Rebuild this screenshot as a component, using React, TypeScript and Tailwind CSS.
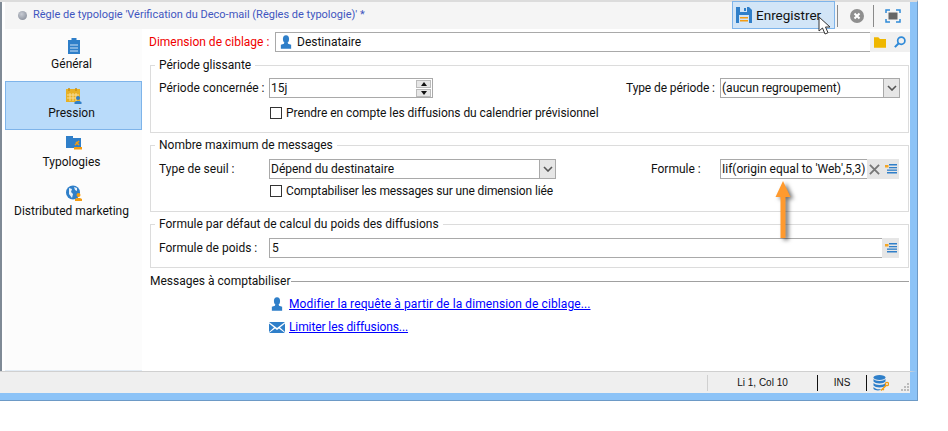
const font = "[font-family:'Roboto','Noto_Sans',sans-serif]";

function User({ className = "w-3 h-3.5" }: { className?: string }) {
  return (
    <svg viewBox="0 0 14 16" className={className}>
      <ellipse cx="7" cy="4.5" rx="3.6" ry="4.5" fill="#2f7fc9" />
      <path d="M5.2 8h3.6l.6 2 3.6 1.2V16H1v-4.8L4.6 10z" fill="#2f7fc9" />
    </svg>
  );
}

function ListIcon() {
  return (
    <svg viewBox="0 0 12 10" className="w-3 h-2.5">
      <rect x="0" y="1" width="3.5" height="2.5" fill="#f5a623" />
      <rect x="4" y="0" width="8" height="1.5" fill="#2f7fc9" />
      <rect x="4" y="3" width="8" height="1.300" fill="#2f7fc9" />
      <rect x="2" y="5.500" width="10" height="1.300" fill="#2f7fc9" />
      <rect x="2" y="8" width="10" height="1.500" fill="#2f7fc9" />
    </svg>
  );
}

function Chevron() {
  return (
    <svg viewBox="0 0 10 6" className="w-2.5 h-1.5">
      <path d="M1 1l4 4 4-4" fill="none" stroke="#555" strokeWidth="1.6" />
    </svg>
  );
}

function Select({ value, width }: { value: string; width: string }) {
  return (
    <div className={`${width} h-5 flex items-center border border-[#a9a9a9] bg-white`}>
      <span className="flex-1 pl-px whitespace-nowrap">{value}</span>
      <div className="w-4 h-full flex items-center justify-center bg-[#e6e6e6] border-l border-[#a9a9a9]">
        <Chevron />
      </div>
    </div>
  );
}

function Check({ label, tracking }: { label: string; tracking: string }) {
  return (
    <label className="flex items-center gap-1 h-4">
      <span className="w-3 h-3 border border-[#333] bg-white" />
      <span className={`whitespace-nowrap ${tracking}`}>{label}</span>
    </label>
  );
}

function NavItem({
  icon,
  label,
  active,
  top = "pt-[6px]",
}: {
  icon: React.ReactNode;
  label: string;
  active?: boolean;
  top?: string;
}) {
  return (
    <div
      className={`h-[49px] flex flex-col items-center ${top} ${
        active ? "border border-[#7eb4ea] bg-[#b9dbfa]" : ""
      }`}
    >
      <div className="h-4 flex items-start justify-center">{icon}</div>
      <span className={`${active ? "mt-px" : "mt-[2px]"} pr-1 leading-4 whitespace-nowrap`}>{label}</span>
    </div>
  );
}

export default function App() {
  return (
    <div className={`w-[948px] h-[431px] bg-white overflow-hidden relative text-[12px] text-[#111] ${font}`}>
      <div className="w-[918px] h-[401px] flex flex-col border-t-[2px] border-t-[#dcdcdc] border-r border-r-[#6d9ac6] border-b border-b-[#6d9ac6]">
        <div className="flex-1 flex flex-col min-h-0 border-l-[2px] border-l-[#7f8a96] border-r-[7px] border-r-[#8cc3f7] pl-[3px]">
          {/* title bar */}
          <div className="h-[27px] shrink-0 flex items-center bg-[#f5f5f5] pl-[13px] pr-[9px]">
            <span className="w-[9px] h-[9px] rounded-full bg-[radial-gradient(circle_at_40%_35%,#c8ccd4,#7d8390)]" />
            <span className="ml-[6px] flex-1 text-[11px] text-[#3f55c0] whitespace-nowrap">
              Règle de typologie 'Vérification du Deco-mail (Règles de typologie)' *
            </span>
            <div className="self-end h-[28px] w-[103px] flex items-center gap-1 pl-[3px] border border-[#7eb4ea] bg-[#d2e5f7] text-[13.5px]">
              <svg viewBox="0 0 16 16" className="w-4 h-4 shrink-0">
                <path d="M0 0h13l3 3v13H0z" fill="#2f7fc9" />
                <rect x="4" y="0" width="7" height="5" fill="#d2e5f7" />
                <rect x="8" y="1" width="2" height="3" fill="#2f7fc9" />
                <rect x="3" y="8" width="10" height="8" fill="#d2e5f7" />
                <rect x="4" y="10" width="8" height="1.5" fill="#f39c12" />
                <rect x="4" y="13" width="8" height="1.5" fill="#f39c12" />
              </svg>
              <span>Enregistrer</span>
            </div>
            <div className="ml-0.5 w-px h-[22px] bg-[#8a8a8a]" />
            <svg viewBox="0 0 14 14" className="ml-3 w-3.5 h-3.5">
              <circle cx="7" cy="7" r="7" fill="#8f8f8f" />
              <path d="M4.5 4.5l5 5M9.5 4.5l-5 5" stroke="#fff" strokeWidth="2" />
            </svg>
            <div className="ml-[9px] w-px h-[22px] bg-[#8a8a8a]" />
            <svg viewBox="0 0 16 14" className="ml-[11px] w-4 h-3.5">
              <path d="M1 4V1h4M11 1h4v3M15 10v3h-4M5 13H1v-3" fill="none" stroke="#2f8ad8" strokeWidth="1.5" />
              <rect x="3.5" y="3.5" width="9" height="7" fill="#666" />
            </svg>
          </div>

          <div className="flex-1 flex min-h-0">
            {/* sidebar */}
            <div className="w-[137px] shrink-0 pt-[3px] bg-[#fcfcfc] border-b border-b-[#e3ecf5]">
              <div className="flex flex-col">
                <NavItem
                  label="Général"
                  icon={
                    <svg viewBox="0 0 12 16" className="w-3 h-4">
                      <path d="M0 2h3.500V0h5v2H12v14H0z" fill="#2f7fc9" />
                      <path d="M2 7h8M2 10h8M2 13h8" stroke="#cfe3f6" strokeWidth="1" />
                    </svg>
                  }
                />
                <NavItem
                  active
                  label="Pression"
                  icon={
                    <svg viewBox="0 0 16 16" className="w-4 h-4">
                      <rect x="0" y="1" width="14" height="13" fill="#e8b125" />
                      <path d="M3 0v3M10 0v3" stroke="#c98f10" strokeWidth="1.5" />
                      <path d="M1 7h12M1 10h12M4 5v8M7 5v8M10 5v8" stroke="#f6dd98" strokeWidth="1" />
                      <circle cx="12" cy="10" r="2" fill="#2f7fc9" />
                      <path d="M8.500 16v-2l2-1h3l2 1v2z" fill="#2f7fc9" />
                    </svg>
                  }
                />
                <NavItem
                  top="pt-[6px]"
                  label="Typologies"
                  icon={
                    <svg viewBox="0 0 16 14" className="w-4 h-3.5">
                      <path d="M0 0h7v2h8v10H0z" fill="#2f7fc9" />
                      <path d="M9 9l4-4M10 6l3 3" stroke="#f39c12" strokeWidth="1.6" />
                      <rect x="8" y="11" width="8" height="2.500" fill="#f39c12" />
                    </svg>
                  }
                />
                <NavItem
                  top="pt-[6px]"
                  label="Distributed marketing"
                  icon={
                    <svg viewBox="0 0 16 16" className="w-4 h-4">
                      <circle cx="7" cy="7.500" r="7" fill="#2f7fc9" />
                      <path d="M3 3l3 1-1 3 2 2-1 4-3-4zM8 2l3 1 0 3-2-1z" fill="#e8f1fa" />
                      <circle cx="12.500" cy="10" r="2" fill="#f39c12" />
                      <path d="M9 16v-2l2-1h3l2 1v2z" fill="#f39c12" />
                    </svg>
                  }
                />
              </div>
            </div>

            {/* form */}
            <div className="flex-1 min-w-0 flex flex-col pl-[7px] bg-white">
              <div className="mt-[3px] flex items-center h-5 shrink-0">
                <span className="text-[#f00000] w-[126px] shrink-0 whitespace-nowrap">Dimension de ciblage :</span>
                <div className="flex-1 h-5 flex items-center gap-[5px] pl-1 border border-[#a9a9a9] border-r-0">
                  <User />
                  <span>Destinataire</span>
                </div>
                <div className="w-10 h-5 flex items-center justify-end gap-2 pr-1 bg-[#f0f0f0]">
                  <svg viewBox="0 0 14 12" className="w-3 h-[11px]">
                    <path d="M0 0h5l2 2h7v10H0z" fill="#efb700" />
                  </svg>
                  <svg viewBox="0 0 14 14" className="w-3 h-3">
                    <circle cx="8.500" cy="5.500" r="4.200" fill="none" stroke="#2f8ad8" strokeWidth="2" />
                    <path d="M5.500 8.500L1 13" stroke="#2f8ad8" strokeWidth="2.400" />
                  </svg>
                </div>
              </div>

              <fieldset className="mt-[5px] ml-px mr-px h-[76px] border border-[#dcdcdc] shrink-0">
                <legend className="ml-1 px-[4px] leading-4 whitespace-nowrap">Période glissante</legend>
                <div className="flex items-center pl-2 h-5 mt-[5px]">
                  <span className="w-[110px] shrink-0 whitespace-nowrap">Période concernée :</span>
                  <div className="w-[164px] h-5 flex items-center border border-[#a9a9a9] pl-px pr-px">
                    <span className="flex-1">15j</span>
                    <div className="w-[15px] h-[17px] flex flex-col gap-px">
                      <div className="flex-1 flex items-center justify-center bg-[#e6e6e6] border border-[#bbb]">
                        <span className="border-x-[3px] border-x-transparent border-b-[4px] border-b-[#111]" />
                      </div>
                      <div className="flex-1 flex items-center justify-center bg-[#e6e6e6] border border-[#bbb]">
                        <span className="border-x-[3px] border-x-transparent border-t-[4px] border-t-[#111]" />
                      </div>
                    </div>
                  </div>
                  <span className="ml-[193px] w-[94px] shrink-0 whitespace-nowrap tracking-[-0.1px]">Type de période :</span>
                  <Select value="(aucun regroupement)" width="w-[180px]" />
                </div>
                <div className="pl-[119px] mt-[7px]">
                  <Check tracking="tracking-[-0.05px]" label="Prendre en compte les diffusions du calendrier prévisionnel" />
                </div>
              </fieldset>

              <fieldset className="mt-1 ml-px mr-px h-[75px] border border-[#dcdcdc] shrink-0">
                <legend className="ml-1 px-[4px] leading-4 whitespace-nowrap">Nombre maximum de messages</legend>
                <div className="flex items-center pl-2 pr-[9px] h-5 mt-[6px]">
                  <span className="w-[110px] shrink-0 whitespace-nowrap">Type de seuil :</span>
                  <Select value="Dépend du destinataire" width="w-[287px]" />
                  <span className="ml-[95px] w-[69px] shrink-0 whitespace-nowrap">Formule :</span>
                  <div className="flex-1 h-5 flex items-center border border-[#a9a9a9] border-r-0 pl-px">
                    <span className="flex-1 whitespace-nowrap">Iif(origin equal to 'Web',5,3)</span>
                    <div className="w-8 h-5 flex items-center justify-center gap-[5px] bg-[#e6e6e6] -my-px">
                      <svg viewBox="0 0 12 12" className="w-[11px] h-[11px]">
                        <path d="M1 1l10 10M11 1L1 11" stroke="#777" strokeWidth="2" />
                      </svg>
                      <ListIcon />
                    </div>
                  </div>
                </div>
                <div className="pl-[119px] mt-1">
                  <Check tracking="tracking-[-0.14px]" label="Comptabiliser les messages sur une dimension liée" />
                </div>
              </fieldset>

              <fieldset className="mt-1 ml-px mr-px h-[52px] border border-[#dcdcdc] shrink-0">
                <legend className="ml-1 px-[4px] leading-4 whitespace-nowrap">Formule par défaut de calcul du poids des diffusions</legend>
                <div className="flex items-center pl-2 pr-[9px] h-5 mt-[6px]">
                  <span className="w-[110px] shrink-0 whitespace-nowrap">Formule de poids :</span>
                  <div className="flex-1 h-5 flex items-center border border-[#a9a9a9] border-r-0 pl-0.5">
                    <span className="flex-1">5</span>
                    <div className="w-[17px] h-5 flex items-center justify-center bg-[#e6e6e6] -my-px">
                      <ListIcon />
                    </div>
                  </div>
                </div>
              </fieldset>

              <div className="mt-[5px] ml-px mr-px flex items-center shrink-0 h-4">
                <span className="whitespace-nowrap">Messages à comptabiliser</span>
                <div className="flex-1 ml-px h-px bg-[#a0a0a0]" />
              </div>
              <div className="mt-[5px] pl-[120px] flex flex-col gap-[3px]">
                <a className="flex items-center gap-1 h-5 text-[#0000ff] underline whitespace-nowrap tracking-[0.1px]">
                  <span className="w-4 flex justify-center shrink-0"><User /></span>
                  Modifier la requête à partir de la dimension de ciblage...
                </a>
                <a className="flex items-center gap-1 h-5 text-[#0000ff] underline whitespace-nowrap tracking-[-0.1px]">
                  <svg viewBox="0 0 16 11" className="w-4 h-[11px] shrink-0">
                    <path d="M0 0h16L8 6z" fill="#2f7fc9" />
                    <path d="M0 1.500L5 5.500 0 10zM16 1.500L11 5.500 16 10zM6 6.500l2 1.500 2-1.500 6 4.500H0z" fill="#2f7fc9" />
                  </svg>
                  Limiter les diffusions...
                </a>
              </div>
            </div>
          </div>
        </div>

        {/* status bar */}
        <div className="h-[22px] shrink-0 flex items-center bg-[#efefef] border-t border-t-[#d0d0d0] border-r-[7px] border-r-[#8cc3f7] text-[10px] [font-family:'Liberation_Sans',sans-serif]">
          <div className="ml-[707px] w-px h-4 bg-[#d0d0d0]" />
          <span className="w-[109px] text-center whitespace-nowrap">Li 1, Col 10</span>
          <div className="w-px h-4 bg-[#111]" />
          <span className="w-[48px] text-center">INS</span>
          <div className="w-px h-4 bg-[#111]" />
          <svg viewBox="0 0 16 16" className="ml-1.5 w-4 h-4">
            <ellipse cx="6.500" cy="2.500" rx="6" ry="2.500" fill="#2f7fc9" />
            <path d="M.5 4c2 2.500 10 2.500 12 0v2.500c-2 2.500-10 2.500-12 0zM.5 8c2 2.500 10 2.500 12 0v2.500c-2 2.500-10 2.500-12 0zM.5 12c2 2.500 6 2.500 7 2v1c-3 1-6 0-7-1z" fill="#2f7fc9" />
            <circle cx="14" cy="9" r="1.600" fill="none" stroke="#f39c12" strokeWidth="1.300" />
            <path d="M13 10.500L8 15.500M9.500 14l1.500 1" stroke="#f39c12" strokeWidth="1.500" />
          </svg>
          <svg viewBox="0 0 8 8" className="ml-auto w-2 h-2 mr-px mt-2">
            <path d="M6 0h2v2H6zM3 3h2v2H3zM6 3h2v2H6zM0 6h2v2H0zM3 6h2v2H3zM6 6h2v2H6z" fill="#bbb" />
          </svg>
        </div>
        <div className="h-[7px] shrink-0 bg-[#8cc3f7]" />
      </div>

      {/* orange annotation arrow */}
      <svg className="absolute left-[770px] top-[178px] w-7 h-[64px] overflow-visible drop-shadow-[3px_2px_2px_rgba(0,0,0,0.55)]" viewBox="0 0 28 64">
        <path d="M13 3l7.500 16h-5v41h-5V19h-5z" fill="#ff9a2e" />
      </svg>

      {/* mouse pointer */}
      <svg className="absolute left-[818px] top-[16px] w-3.5 h-[20px]" viewBox="0 0 14 20">
        <path d="M1 1v14l3.500-3 2.500 6 3-1.300-2.500-5.700H12z" fill="#fff" stroke="#333" strokeWidth="1" />
      </svg>
    </div>
  );
}
